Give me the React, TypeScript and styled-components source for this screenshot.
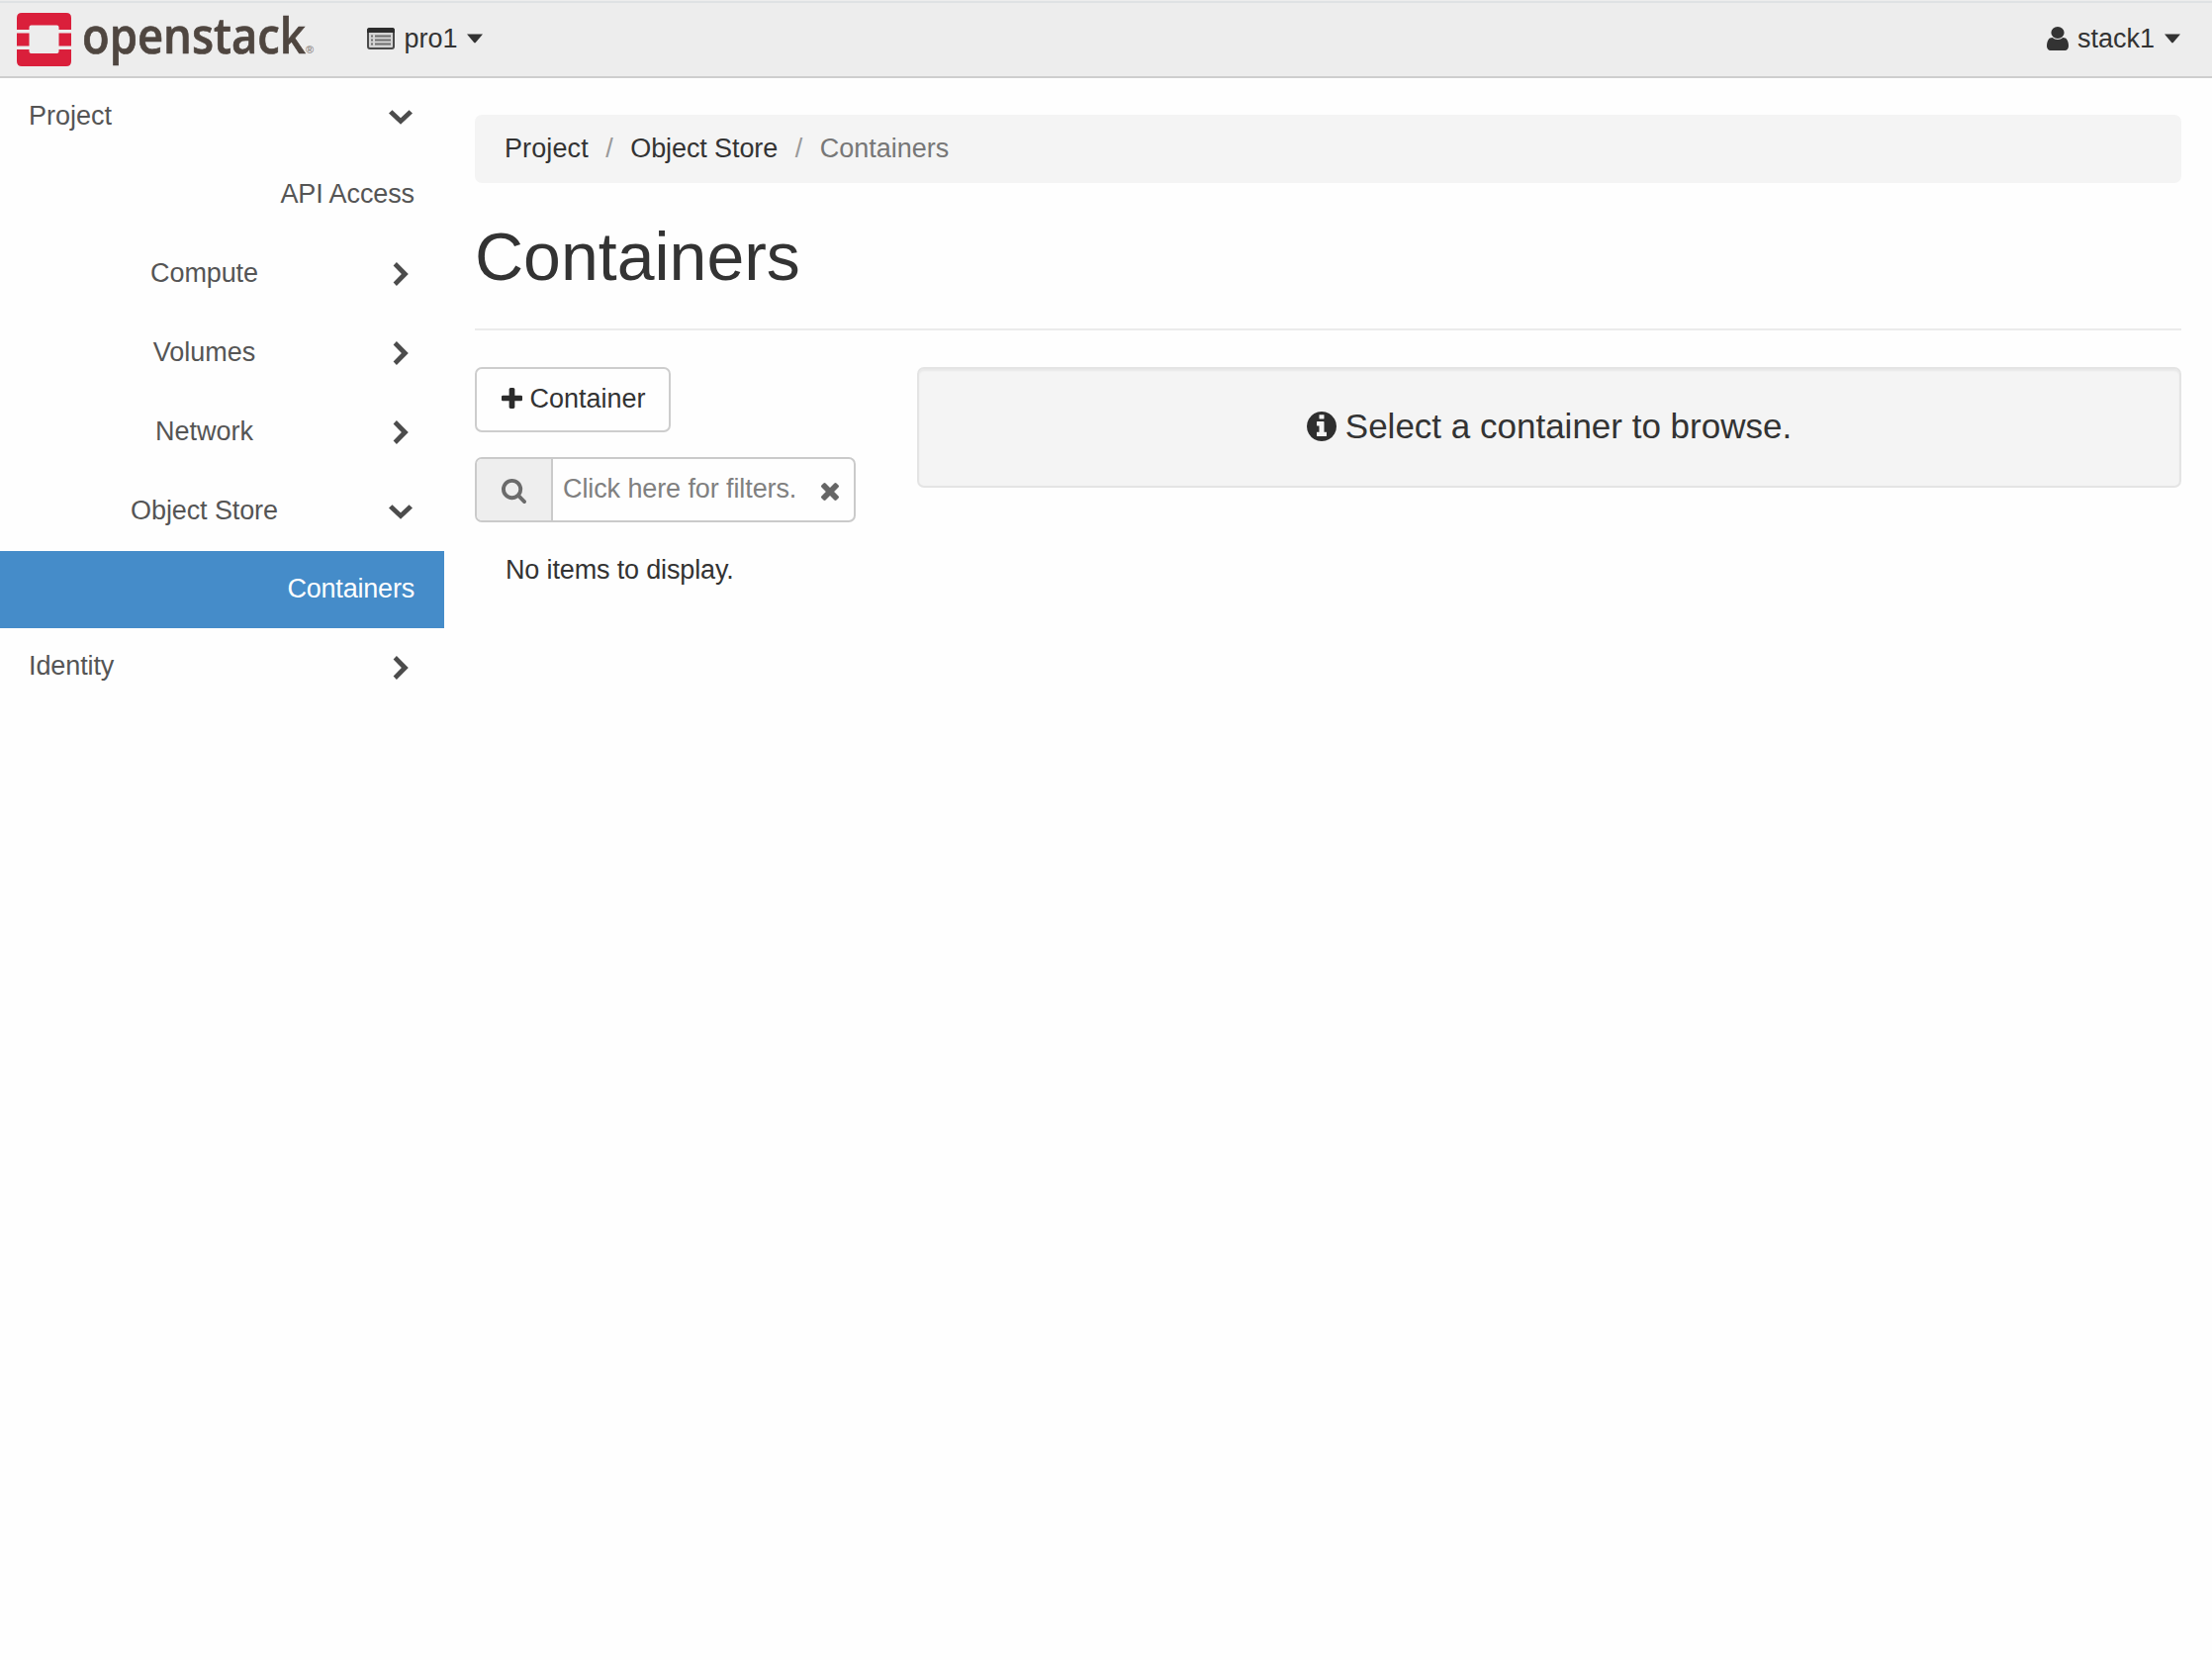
import React from 'react';
import styled, { createGlobalStyle } from 'styled-components';

const GlobalStyle = createGlobalStyle`
  *, *::before, *::after { box-sizing: border-box; }
  html, body { margin: 0; padding: 0; background: #fefefe; }
  body {
    font-family: "Liberation Sans", Arial, sans-serif;
    font-size: 27px;
    line-height: 38px;
    color: #333;
    overflow: hidden;
  }
`;

const Page = styled.div`
  display: flex;
  flex-direction: column;
  min-height: 1678px;
`;

const Header = styled.header`
  display: flex;
  align-items: flex-start;
  justify-content: space-between;
  height: 79px;
  padding: 0 32px 0 17px;
  background: #ededed;
  border-bottom: 2px solid #cecece;
  box-shadow: inset 0 1px 0 #ededed, inset 0 3px 0 #dfe2e4;
`;

const Brand = styled.a`
  display: flex;
  align-items: flex-start;
  width: 354px;
  padding-top: 13px;
`;

const Wordmark = styled.span`
  flex: none;
  width: 226px;
  margin: -17px 0 0 11px;
  font-family: "Open Sans", "Noto Sans", sans-serif;
  font-size: 51px;
  font-weight: 600;
  line-height: 76px;
  color: #4f4640;
  -webkit-text-stroke: 0.7px #4f4640;
  white-space: nowrap;
  transform: scaleX(0.89);
  transform-origin: 0 0;
`;

const Registered = styled.span`
  font-size: 11px;
  line-height: 12px;
  font-weight: 700;
  margin-top: 31px;
  color: #8d8884;
`;

const HeaderGroup = styled.div`
  display: flex;
`;

const HeaderMenu = styled.a`
  display: flex;
  align-items: center;
  height: 38px;
  margin-top: 20px;
`;

const HeaderText = styled.span<{ $left: number; $right: number }>`
  margin: 0 ${(p) => p.$right}px 0 ${(p) => p.$left}px;
`;

const Body = styled.div`
  display: flex;
  flex: 1;
`;

const Sidebar = styled.nav`
  flex: none;
  width: 449px;
  color: #555;
`;

type Level = 'top' | 'group' | 'leaf';

const NavRow = styled.a<{ $h: number; $active?: boolean }>`
  display: flex;
  align-items: center;
  height: ${(p) => p.$h}px;
  padding: 0 30px 0 29px;
  background: ${(p) => (p.$active ? '#458cc9' : 'transparent')};
  color: ${(p) => (p.$active ? '#fff' : 'inherit')};
`;

const NavLabel = styled.span<{ $level: Level; $ls: number }>`
  flex: 1;
  padding-right: ${(p) => (p.$level === 'leaf' ? 0 : 7)}px;
  padding-bottom: 3px;
  letter-spacing: ${(p) => p.$ls}px;
  text-align: ${(p) => (p.$level === 'top' ? 'left' : p.$level === 'group' ? 'center' : 'right')};
`;

const ChevronBox = styled.span`
  display: flex;
  justify-content: center;
  width: 28px;
`;

const Main = styled.main`
  flex: 1;
  padding: 37px 31px 0 31px;
`;

const Breadcrumb = styled.ol`
  display: flex;
  align-items: center;
  height: 69px;
  margin: 0;
  padding: 0 30px 2px;
  border-radius: 7px;
  background: #f4f4f4;
  list-style: none;
`;

const Crumb = styled.li<{ $muted?: boolean; $ls: number }>`
  letter-spacing: ${(p) => p.$ls}px;
  color: ${(p) => (p.$muted ? '#777' : '#333')};
`;

const Slash = styled.li`
  padding: 0 17.5px;
  color: #999;
`;

const Title = styled.h1`
  height: 149px;
  margin: 0 0 37px;
  padding-top: 36px;
  border-bottom: 2px solid #ebebeb;
  font-size: 68px;
  font-weight: 400;
  line-height: 76px;
`;

const Columns = styled.div`
  display: flex;
  align-items: flex-start;
`;

const ListColumn = styled.section`
  width: 385px;
  margin-right: 62px;
`;

const AddButton = styled.button`
  display: flex;
  align-items: center;
  width: 198px;
  height: 66px;
  padding: 0 0 3px 25px;
  border: 2px solid #cdcdcd;
  border-radius: 7px;
  background: #fefefe;
  color: #333;
  font: inherit;
`;

const ButtonText = styled.span`
  margin-left: 7.5px;
`;

const Filter = styled.div`
  display: flex;
  height: 66px;
  margin-top: 25px;
  border: 2px solid #cacaca;
  border-radius: 7px;
  overflow: hidden;
`;

const Addon = styled.span`
  display: flex;
  align-items: center;
  width: 77px;
  padding: 2px 0 0 25px;
  border-right: 2px solid #cacaca;
  background: #eee;
`;

const FilterField = styled.span`
  display: flex;
  flex: 1;
  align-items: center;
  padding-left: 10px;
  color: #808080;
`;

const Placeholder = styled.span`
  width: 260.5px;
  padding-bottom: 3px;
  letter-spacing: -0.1px;
`;

const ClearIcon = styled.span`
  display: flex;
  padding-top: 3px;
`;

const Empty = styled.p`
  margin: 29px 0 0;
  padding-left: 31px;
  letter-spacing: -0.15px;
`;

const Well = styled.section`
  display: flex;
  flex: 1;
  align-items: center;
  justify-content: center;
  height: 122px;
  padding-bottom: 2px;
  border: 2px solid #e4e4e4;
  border-radius: 7px;
  background: #f4f4f4;
  box-shadow: inset 0 2px 2px rgba(0, 0, 0, 0.05);
  font-size: 35px;
  line-height: 40px;
`;

const WellText = styled.span`
  margin-left: 9px;
`;

const Svg = styled.svg`
  flex: none;
  display: block;
`;

const Logo = () => (
  <Svg width="55" height="54" viewBox="0 0 55 54" fill="#da1f3b">
    <path d="M5 0H50Q55 0 55 5V17H42.500V14.500Q42.500 12.500 40.500 12.500H14.500Q12.500 12.500 12.500 14.500V17H0V5Q0 0 5 0Z" />
    <path d="M0 20.500H12.500V33.500H0ZM42.500 20.500H55V33.500H42.500Z" />
    <path d="M0 37H12.500V39Q12.500 41 14.500 41H40.500Q42.500 41 42.500 39V37H55V49Q55 54 50 54H5Q0 54 0 49Z" />
  </Svg>
);

const ListIcon = () => (
  <Svg width="28" height="22" viewBox="0 0 28 22">
    <rect x="1" y="1" width="26" height="20" rx="2" fill="#d4d4d4" stroke="#4a4a4a" strokeWidth="2" />
    <path d="M0 5V2.500Q0 0 2.500 0H25.500Q28 0 28 2.500V5Z" fill="#2d2d2d" />
    <path d="M4 8.500H6M4 12.500H6M4 16.500H6M8 8.500H24M8 12.500H24M8 16.500H24" stroke="#6e6e6e" strokeWidth="2" />
  </Svg>
);

const Caret = () => (
  <Svg width="16" height="10" viewBox="0 0 16 10" fill="#333">
    <path d="M0 0.500H16L8.800 9Q8 9.800 7.200 9Z" />
  </Svg>
);

const UserIcon = () => (
  <Svg width="22" height="24" viewBox="256 128 1280 1536" preserveAspectRatio="none" fill="#333">
    <path d="M1536 1399q0 109-62.500 187t-150.500 78h-854q-88 0-150.500-78t-62.500-187q0-85 8.500-160.500t31.500-152 58.500-131 94-89 134.500-34.500q131 128 313 128t313-128q76 0 134.500 34.500t94 89 58.500 131 31.500 152 8.500 160.500zm-256-887q0 159-112.500 271.500t-271.500 112.500-271.500-112.500-112.500-271.500 112.500-271.500 271.500-112.500 271.500 112.500 112.500 271.500z" />
  </Svg>
);

const Chevron = ({ open }: { open: boolean }) =>
  open ? (
    <Svg width="24" height="15" viewBox="0 0 24 15" fill="#4c4c4c">
      <path d="M0 3.600L3.500 0.300L12 8.300L20.500 0.300L24 3.600L12 14.800Z" />
    </Svg>
  ) : (
    <Svg width="16" height="24" viewBox="0 0 16 24" fill="#4c4c4c">
      <path d="M3.900 0L0.600 3.500L8.900 12L0.600 20.500L3.900 24L15.800 12Z" />
    </Svg>
  );

const PlusIcon = () => (
  <Svg width="21" height="21" viewBox="192 128 1408 1408" fill="#2b2b2b">
    <path d="M1600 736v192q0 40-28 68t-68 28h-416v416q0 40-28 68t-68 28h-192q-40 0-68-28t-28-68v-416h-416q-40 0-68-28t-28-68v-192q0-40 28-68t68-28h416v-416q0-40 28-68t68-28h192q40 0 68 28t28 68v416h416q40 0 68 28t28 68z" />
  </Svg>
);

const SearchIcon = () => (
  <Svg width="25" height="25" viewBox="64 128 1664 1664" fill="#6b6b6b">
    <path d="M1216 832q0-185-131.500-316.500t-316.500-131.500-316.500 131.500-131.500 316.500 131.500 316.500 316.500 131.500 316.500-131.500 131.500-316.500zm512 832q0 52-38 90t-90 38q-54 0-90-38l-343-342q-179 124-399 124-143 0-273.500-55.500t-225-150-150-225-55.500-273.500 55.500-273.500 150-225 225-150 273.500-55.500 273.500 55.500 225 150 150 225 55.500 273.500q0 220-124 399l343 343q37 37 37 90z" />
  </Svg>
);

const TimesIcon = () => (
  <Svg width="18" height="18" viewBox="302 366 1188 1188" fill="#666">
    <path d="M1490 1322q0 40-28 68l-136 136q-28 28-68 28t-68-28l-294-294-294 294q-28 28-68 28t-68-28l-136-136q-28-28-28-68t28-68l294-294-294-294q-28-28-28-68t28-68l136-136q28-28 68-28t68 28l294 294 294-294q28-28 68-28t68 28l136 136q28 28 28 68t-28 68l-294 294 294 294q28 28 28 68z" />
  </Svg>
);

const InfoIcon = () => (
  <Svg width="30" height="30" viewBox="128 128 1536 1536" fill="#2e2e2e">
    <path d="M1152 1376v-160q0-14-9-23t-23-9h-96v-512q0-14-9-23t-23-9h-320q-14 0-23 9t-9 23v160q0 14 9 23t23 9h96v320h-96q-14 0-23 9t-9 23v160q0 14 9 23t23 9h448q14 0 23-9t9-23zm-128-896v-160q0-14-9-23t-23-9h-192q-14 0-23 9t-9 23v160q0 14 9 23t23 9h192q14 0 23-9t9-23zm640 416q0 209-103 385.500t-279.500 279.500-385.500 103-385.500-103-279.500-279.500-103-385.500 103-385.500 279.500-279.500 385.500-103 385.500 103 279.500 279.500 103 385.500z" />
  </Svg>
);

interface NavItem {
  label: string;
  level: Level;
  h: number;
  ls: number;
  open?: boolean;
  active?: boolean;
}

const navItems: NavItem[] = [
  { label: 'Project', level: 'top', h: 79, ls: 0, open: true },
  { label: 'API Access', level: 'leaf', h: 79, ls: -0.1 },
  { label: 'Compute', level: 'group', h: 80, ls: -0.1, open: false },
  { label: 'Volumes', level: 'group', h: 80, ls: 0, open: false },
  { label: 'Network', level: 'group', h: 80, ls: 0, open: false },
  { label: 'Object Store', level: 'group', h: 80, ls: -0.1, open: true },
  { label: 'Containers', level: 'leaf', h: 78, ls: -0.2, active: true },
  { label: 'Identity', level: 'top', h: 79, ls: -0.1, open: false },
];

export default function App() {
  return (
    <Page>
      <GlobalStyle />
      <Header>
        <HeaderGroup>
          <Brand>
            <Logo />
            <Wordmark>openstack</Wordmark>
            <Registered>®</Registered>
          </Brand>
          <HeaderMenu>
            <ListIcon />
            <HeaderText $left={9.5} $right={9}>pro1</HeaderText>
            <Caret />
          </HeaderMenu>
        </HeaderGroup>
        <HeaderMenu>
          <UserIcon />
          <HeaderText $left={9} $right={10}>stack1</HeaderText>
          <Caret />
        </HeaderMenu>
      </Header>
      <Body>
        <Sidebar>
          {navItems.map((item) => (
            <NavRow key={item.label} $h={item.h} $active={item.active}>
              <NavLabel $level={item.level} $ls={item.ls}>{item.label}</NavLabel>
              {item.open !== undefined && (
                <ChevronBox>
                  <Chevron open={item.open} />
                </ChevronBox>
              )}
            </NavRow>
          ))}
        </Sidebar>
        <Main>
          <Breadcrumb>
            <Crumb $ls={0.1}>Project</Crumb>
            <Slash>/</Slash>
            <Crumb $ls={-0.1}>Object Store</Crumb>
            <Slash>/</Slash>
            <Crumb $ls={0} $muted>Containers</Crumb>
          </Breadcrumb>
          <Title>Containers</Title>
          <Columns>
            <ListColumn>
              <AddButton>
                <PlusIcon />
                <ButtonText>Container</ButtonText>
              </AddButton>
              <Filter>
                <Addon>
                  <SearchIcon />
                </Addon>
                <FilterField>
                  <Placeholder>Click here for filters.</Placeholder>
                  <ClearIcon>
                    <TimesIcon />
                  </ClearIcon>
                </FilterField>
              </Filter>
              <Empty>No items to display.</Empty>
            </ListColumn>
            <Well>
              <InfoIcon />
              <WellText>Select a container to browse.</WellText>
            </Well>
          </Columns>
        </Main>
      </Body>
    </Page>
  );
}
